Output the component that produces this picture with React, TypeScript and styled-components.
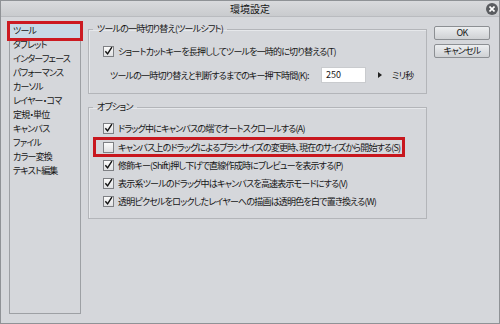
import styled, { createGlobalStyle } from "styled-components";

const GlobalStyle = createGlobalStyle`
    body {
        margin: 0;
        background: #d5d7db;
        font-family: "Noto Sans CJK JP", "Noto Sans", sans-serif;
        font-feature-settings: "palt";
        color: #161616;
    }
`;

const Window = styled.div`
    width: 500px;
    height: 324px;
    box-sizing: border-box;
    border: 1px solid #8f9296;
    background: #d5d7db;
    display: flex;
    flex-direction: column;
    font-size: 9px;
    letter-spacing: -0.8px;
`;

const TitleBar = styled.div`
    height: 15px;
    display: grid;
    grid-template-columns: 1fr auto 1fr;
    align-items: center;
    background: linear-gradient(#d9dadd, #c9cbce);
    border-bottom: 1px solid #b9bbbf;
    font-size: 10px;
    letter-spacing: 0;
    line-height: 15px;
`;

const Title = styled.div`
    grid-column: 2;
`;

const Close = styled.div`
    justify-self: end;
    margin-right: 1px;
    width: 12px;
    height: 12px;
    border-radius: 50%;
    background: #5a5c60;
    display: flex;
    align-items: center;
    justify-content: center;
`;

const Body = styled.div`
    flex: 1;
    display: flex;
    padding: 5px 8px 8px 8px;
    gap: 7px;
`;

const Sidebar = styled.ul`
    list-style: none;
    margin: 0;
    width: 72px;
    box-sizing: border-box;
    border: 1px solid #9da0a4;
    padding: 1px 0 0;
    height: 292px;
    align-self: flex-start;
`;

const Item = styled.li<{ $selected?: boolean }>`
    height: 14px;
    line-height: 14px;
    padding-left: 3px;
    white-space: nowrap;
    background: ${(p) => (p.$selected ? "#c8dae6" : "transparent")};
    outline: ${(p) => (p.$selected ? "3px solid #cc1b22" : "none")};
`;

const Main = styled.div`
    width: 339px;
    display: flex;
    flex-direction: column;
    gap: 6px;
`;

const Group = styled.fieldset`
    margin: 1px 0 0;
    padding: 0;
    border: 1px solid #b3b5b9;
    box-shadow: inset 1px 1px 0 #e6e8eb;
    min-width: 0;
`;

const Legend = styled.legend`
    margin-left: 4px;
    padding: 0 4px;
    line-height: 12px;
`;

const Rows = styled.div<{ $top: number; $bottom: number }>`
    display: flex;
    flex-direction: column;
    padding: ${(p) => p.$top}px 0 ${(p) => p.$bottom}px;
`;

const Row = styled.div<{ $marked?: boolean }>`
    display: flex;
    align-items: center;
    gap: 4px;
    height: ${(p) => (p.$marked ? "20px" : "18px")};
    margin: ${(p) => (p.$marked ? "0 0 -1px 4px" : "0")};
    padding-left: ${(p) => (p.$marked ? "10px" : "14px")};
    padding-right: ${(p) => (p.$marked ? "5px" : "0")};
    width: fit-content;
    white-space: nowrap;
    box-shadow: ${(p) => (p.$marked ? "inset 0 0 0 3px #c8171e" : "none")};
`;

const Box = styled.span`
    width: 11px;
    height: 11px;
    box-sizing: border-box;
    border: 1px solid #7e8084;
    background: linear-gradient(#fbfbfb, #dfe0e2);
    display: flex;
    align-items: center;
    justify-content: center;
    flex-shrink: 0;
`;

const DelayRow = styled.div`
    display: flex;
    align-items: center;
    height: 18px;
    margin-top: 6px;
    padding-left: 21px;
    white-space: nowrap;
`;

const DelayLabel = styled.span`
    width: 198px;
`;

const NumberInput = styled.div`
    width: 45px;
    height: 16px;
    box-sizing: border-box;
    margin-left: 13px;
    background: #fff;
    border: 1px solid #c9cbce;
    padding-left: 4px;
    line-height: 14px;
    letter-spacing: 0;
`;

const Arrow = styled.span`
    margin-left: 12px;
    display: flex;
`;

const Unit = styled.span`
    margin-left: 10px;
`;

const Buttons = styled.div`
    width: 56px;
    padding-top: 4px;
    display: flex;
    flex-direction: column;
    gap: 4px;
`;

const Button = styled.div`
    height: 14px;
    box-sizing: border-box;
    border: 1px solid #8c8f93;
    border-radius: 2px;
    background: linear-gradient(#eceef0, #cfd1d4);
    line-height: 12px;
    text-align: center;
`;

function Check({ on }: { on: boolean }) {
    return (
        <Box>
            {on && (
                <svg width="10" height="10" viewBox="0 0 10 10">
                    <path d="M1.5 5.2 L4 8.2 L8.8 0.8" fill="none" stroke="#111" strokeWidth="1.6" />
                </svg>
            )}
        </Box>
    );
}

const menu = [
    "ツール",
    "タブレット",
    "インターフェース",
    "パフォーマンス",
    "カーソル",
    "レイヤー・コマ",
    "定規・単位",
    "キャンバス",
    "ファイル",
    "カラー変換",
    "テキスト編集",
];

const options = [
    { label: "ドラッグ中にキャンバスの端でオートスクロールする(A)", on: true },
    { label: "キャンバス上のドラッグによるブラシサイズの変更時、現在のサイズから開始する(S)", on: false, marked: true },
    { label: "修飾キー(Shift)押し下げで直線作成時にプレビューを表示する(P)", on: true },
    { label: "表示系ツールのドラッグ中はキャンバスを高速表示モードにする(V)", on: true },
    { label: "透明ピクセルをロックしたレイヤーへの描画は透明色を白で置き換える(W)", on: true },
];

export default function App() {
    return (
        <>
            <GlobalStyle />
            <Window>
                <TitleBar>
                    <Title>環境設定</Title>
                    <Close>
                        <svg width="6" height="6" viewBox="0 0 6 6">
                            <path d="M0.5 0.5 L5.5 5.5 M5.5 0.5 L0.5 5.5" stroke="#fff" strokeWidth="1.6" />
                        </svg>
                    </Close>
                </TitleBar>
                <Body>
                    <Sidebar>
                        {menu.map((m, i) => (
                            <Item key={m} $selected={i === 0}>
                                {m}
                            </Item>
                        ))}
                    </Sidebar>
                    <Main>
                        <Group>
                            <Legend>ツールの一時切り替え(ツールシフト)</Legend>
                            <Rows $top={7} $bottom={9}>
                                <Row>
                                    <Check on={true} />
                                    ショートカットキーを長押ししてツールを一時的に切り替える(T)
                                </Row>
                                <DelayRow>
                                    <DelayLabel>ツールの一時切り替えと判断するまでのキー押下時間(K):</DelayLabel>
                                    <NumberInput>250</NumberInput>
                                    <Arrow>
                                        <svg width="4" height="6" viewBox="0 0 4 6">
                                            <path d="M0 0 L4 3 L0 6 Z" fill="#222" />
                                        </svg>
                                    </Arrow>
                                    <Unit>ミリ秒</Unit>
                                </DelayRow>
                            </Rows>
                        </Group>
                        <Group>
                            <Legend>オプション</Legend>
                            <Rows $top={6} $bottom={8}>
                                {options.map((o) => (
                                    <Row key={o.label} $marked={o.marked}>
                                        <Check on={o.on} />
                                        {o.label}
                                    </Row>
                                ))}
                            </Rows>
                        </Group>
                    </Main>
                    <Buttons>
                        <Button>OK</Button>
                        <Button>キャンセル</Button>
                    </Buttons>
                </Body>
            </Window>
        </>
    );
}
